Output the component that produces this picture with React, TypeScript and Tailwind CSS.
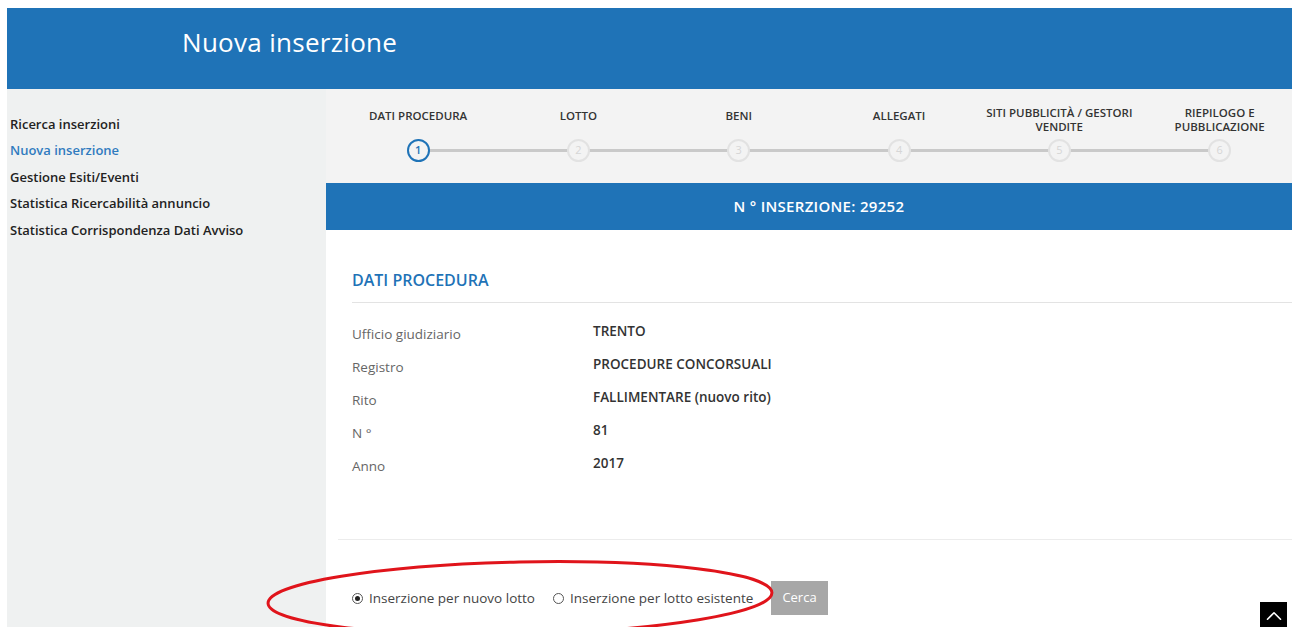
import { ChevronUp } from "lucide-react";

const menu = [
  { label: "Ricerca inserzioni", active: false },
  { label: "Nuova inserzione", active: true },
  { label: "Gestione Esiti/Eventi", active: false },
  { label: "Statistica Ricercabilità annuncio", active: false },
  { label: "Statistica Corrispondenza Dati Avviso", active: false },
];

const steps = [
  ["DATI PROCEDURA"],
  ["LOTTO"],
  ["BENI"],
  ["ALLEGATI"],
  ["SITI PUBBLICITÀ / GESTORI", "VENDITE"],
  ["RIEPILOGO E", "PUBBLICAZIONE"],
];

const dati = [
  ["Ufficio giudiziario", "TRENTO"],
  ["Registro", "PROCEDURE CONCORSUALI"],
  ["Rito", "FALLIMENTARE (nuovo rito)"],
  ["N °", "81"],
  ["Anno", "2017"],
];

function Stepper() {
  return (
    <div className="flex h-[94px] bg-[#f3f3f3] pl-[12px] overflow-hidden">
      {steps.map((lines, i) => {
        const active = i === 0;
        return (
          <div key={i} className="relative w-[160.3px] shrink-0 flex flex-col items-center">
            <div
              className={`h-[50px] flex flex-col items-center text-[11.5px] leading-[14px] font-semibold text-[#333] text-center ${
                lines.length > 1 ? "pt-[17px]" : "pt-[20px]"
              }`}
            >
              {lines.map((l) => (
                <span key={l}>{l}</span>
              ))}
            </div>
            {i < steps.length - 1 && (
              <div className="absolute top-[60px] left-1/2 w-full h-[3px] bg-[#c9c9c9]" />
            )}
            <div
              className={`relative z-10 w-[23px] h-[23px] rounded-full flex items-center justify-center text-[11px] bg-[#f3f3f3] ${
                active
                  ? "border-2 border-[#1f73b7] text-[#1f73b7] font-semibold"
                  : "border-2 border-[#e2e2e2] text-[#d6d6d6]"
              }`}
            >
              {i + 1}
            </div>
          </div>
        );
      })}
    </div>
  );
}

export default function App() {
  return (
    <div
      className="relative min-h-[627px] bg-white pl-[7px] pt-[8px] overflow-hidden"
      style={{ fontFamily: '"Open Sans", "Liberation Sans", sans-serif' }}
    >
      <header className="h-[81px] bg-[#1f73b7] flex items-center pl-[175px] pb-[12px]">
        <h1 className="text-[26px] text-white font-normal tracking-[0.3px]">Nuova inserzione</h1>
      </header>

      <div className="flex min-h-[538px]">
        <aside className="w-[319px] shrink-0 bg-[#eff1f1] pt-[22px] pl-[3px]">
          <ul className="flex flex-col">
            {menu.map((m) => (
              <li
                key={m.label}
                className={`h-[26.5px] flex items-center text-[13px] font-semibold ${
                  m.active ? "text-[#2f7bbf]" : "text-[#222]"
                }`}
              >
                {m.label}
              </li>
            ))}
          </ul>
        </aside>

        <main className="flex-1 flex flex-col">
          <Stepper />

          <div className="h-[47px] bg-[#1f73b7] flex items-center justify-center pl-[12px] text-white text-[15px] font-semibold tracking-[0.3px]">
            N ° INSERZIONE: 29252
          </div>

          <section className="pl-[26px] pr-[4px] pt-[38px]">
            <h2 className="text-[16px] font-semibold text-[#1f73b7] pb-[10px] border-b border-[#e3e3e3]">
              DATI PROCEDURA
            </h2>

            <div className="pt-[15px] flex flex-col">
              {dati.map(([k, v]) => (
                <div key={k} className="h-[33px] flex items-center">
                  <span className="w-[241px] text-[13.5px] text-[#666]">{k}</span>
                  <span className="-mt-[7px] text-[13.5px] font-semibold text-[#333]">{v}</span>
                </div>
              ))}
            </div>
          </section>

          <div className="ml-[12px] mt-[56px] border-t border-[#ececec]" />

          <div className="pl-[26px] pt-[41px] flex items-center">
            <label className="flex items-center gap-[6px] text-[13.5px] text-[#444]">
              <span className="w-[11px] h-[11px] rounded-full border border-[#555] flex items-center justify-center">
                <span className="w-[5px] h-[5px] rounded-full bg-[#222]" />
              </span>
              Inserzione per nuovo lotto
            </label>
            <label className="ml-[18px] flex items-center gap-[6px] text-[13.5px] text-[#444]">
              <span className="w-[11px] h-[11px] rounded-full border border-[#555]" />
              Inserzione per lotto esistente
            </label>
            <button className="ml-[18px] h-[34px] px-[11px] bg-[#a7a7a7] text-white text-[13px] font-medium">
              Cerca
            </button>
          </div>
        </main>
      </div>

      {/* annotation ring around the lot options */}
      <svg
        className="absolute left-[262px] top-[555px] pointer-events-none"
        width="520"
        height="90"
        viewBox="0 0 520 90"
      >
        <ellipse
          cx="258"
          cy="43"
          rx="252"
          ry="36"
          transform="rotate(-1.2 258 43)"
          fill="none"
          stroke="#e0141b"
          strokeWidth="3"
        />
      </svg>

      <button className="absolute right-[5px] top-[602px] w-[27px] h-[27px] bg-black flex items-center justify-center">
        <ChevronUp size={26} strokeWidth={1.5} className="text-white" />
      </button>
    </div>
  );
}
